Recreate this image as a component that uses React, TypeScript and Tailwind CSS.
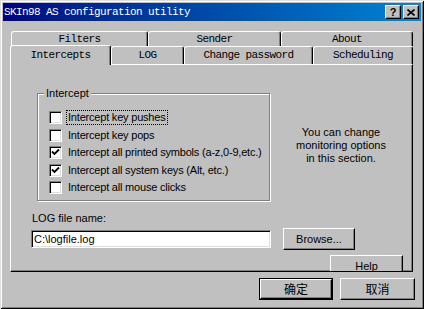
import { ReactNode } from "react"

const sans = "font-['Liberation_Sans',Arial,sans-serif] text-[11px] text-black"
const mono = "font-['Liberation_Mono','Courier_New',monospace] text-[11px] tracking-[-0.6px]"
const cjk = "font-['Noto_Sans_CJK_SC','Liberation_Sans',sans-serif] text-[12px] text-black"

const raised =
    "border border-t-white border-l-white border-r-black border-b-black shadow-[inset_-1px_-1px_0_#808080] bg-[#c0c0c0]"
const sunken =
    "border border-t-[#808080] border-l-[#808080] border-r-white border-b-white shadow-[inset_1px_1px_0_#000,inset_-1px_-1px_0_#dfdfdf] bg-white"

function Tab({ label, width, selected }: { label: string; width: string; selected?: boolean }) {
    return (
        <div
            className={`${width} ${
                selected ? "h-[20px] -mt-[1px] bg-[#c0c0c0]" : "h-full"
            } flex items-center justify-center rounded-t-[3px] border-t border-l border-r border-t-white border-l-white border-r-black shadow-[inset_-1px_0_0_#808080] ${mono}`}
        >
            {label}
        </div>
    )
}

function Checkbox({ checked, children, focus }: { checked?: boolean; children: ReactNode; focus?: boolean }) {
    return (
        <div className="flex items-center h-[17.5px] whitespace-nowrap">
            <div className={`w-[13px] h-[13px] shrink-0 ${sunken} flex items-center justify-center`}>
                {checked && (
                    <svg width="9" height="9" viewBox="0 0 9 9">
                        <path d="M1 3.5 L3.5 6 L8 1.5" stroke="#000" strokeWidth="1.8" fill="none" />
                    </svg>
                )}
            </div>
            <span className={`ml-[5px] px-px leading-[13px] tracking-[-0.2px] ${focus ? "outline outline-1 outline-dotted outline-black" : ""}`}>
                {children}
            </span>
        </div>
    )
}

export default function App() {
    return (
        <div
            className={`w-[424px] h-[309px] bg-[#c0c0c0] p-[3px] flex flex-col shadow-[inset_1px_1px_0_#dfdfdf,inset_-1px_-1px_0_#000,inset_2px_2px_0_#fff,inset_-2px_-2px_0_#808080] ${sans}`}
        >
            {/* title bar */}
            <div className="h-[18px] flex items-center bg-linear-to-r from-[#000080] to-[#1084d0] pl-[1px] pr-[2px]">
                <span className={`${mono} text-white`}>SKIn98 AS configuration utility</span>
                <div className="ml-auto flex items-center">
                    <div className={`w-[16px] h-[14px] ${raised} flex items-center justify-center font-bold text-[11px] leading-none`}>
                        ?
                    </div>
                    <div className={`ml-[2px] w-[16px] h-[14px] ${raised} flex items-center justify-center`}>
                        <svg width="8" height="7" viewBox="0 0 8 7">
                            <path d="M0.5 0.5 L7.5 6.5 M7.5 0.5 L0.5 6.5" stroke="#000" strokeWidth="1.6" />
                        </svg>
                    </div>
                </div>
            </div>

            <div className="pl-[7px] mt-[10px]">
                {/* back row of tabs */}
                <div className="flex h-[15px] ml-px">
                    <Tab label="Filters" width="w-[137px]" />
                    <Tab label="Sender" width="w-[133px]" />
                    <Tab label="About" width="w-[132px]" />
                </div>
                {/* front row of tabs */}
                <div className="flex h-[18px] relative z-10">
                    <Tab label="Intercepts" width="w-[101px]" selected />
                    <Tab label="LOG" width="w-[73px]" />
                    <Tab label="Change password" width="w-[129px]" />
                    <Tab label="Scheduling" width="w-[100px]" />
                </div>

                {/* panel */}
                <div className="w-[403px] h-[208px] border border-t-white border-l-white border-r-black border-b-black shadow-[inset_-1px_-1px_0_#808080] overflow-hidden pl-[20px] pt-[28px]">
                    <div className="flex">
                        <div className="ml-[6px] w-[233px] h-[108px] shrink-0 relative border border-[#808080] shadow-[1px_1px_0_#fff,inset_1px_1px_0_#fff] pl-[11px] pt-[15px]">
                            <span className="absolute -top-[7px] left-[6px] px-[2px] bg-[#c0c0c0] leading-[13px]">Intercept</span>
                            <Checkbox focus>Intercept key pushes</Checkbox>
                            <Checkbox>Intercept key pops</Checkbox>
                            <Checkbox checked>Intercept all printed symbols (a-z,0-9,etc.)</Checkbox>
                            <Checkbox checked>Intercept all system keys (Alt, etc.)</Checkbox>
                            <Checkbox>Intercept all mouse clicks</Checkbox>
                        </div>
                        <div className="flex-1 flex items-center justify-center text-center leading-[13px] -mt-[3px]">
                            <p>
                                You can change
                                <br />
                                monitoring options
                                <br />
                                in this section.
                            </p>
                        </div>
                    </div>

                    <div className="mt-[11px] ml-px leading-[13px]">LOG file name:</div>
                    <div className="flex items-start h-[18px] mt-[5px]">
                        <div className={`w-[240px] h-[18px] ${sunken} flex items-center pl-[2px] leading-none`}>C:\logfile.log</div>
                        <div className={`ml-[12px] -mt-[2px] w-[72px] h-[22px] ${raised} flex items-center justify-center`}>Browse...</div>
                    </div>
                    <div className={`ml-[299px] mt-[7px] w-[73px] h-[22px] ${raised} flex items-center justify-center`}>Help</div>
                </div>

                {/* bottom buttons */}
                <div className="flex mt-[6px] ml-[249px]">
                    <div className="w-[74px] h-[22px] border border-black">
                        <div className={`w-full h-full ${raised} flex items-center justify-center ${cjk}`}>确定</div>
                    </div>
                    <div className={`ml-[7px] w-[75px] h-[22px] ${raised} flex items-center justify-center ${cjk}`}>取消</div>
                </div>
            </div>
        </div>
    )
}
